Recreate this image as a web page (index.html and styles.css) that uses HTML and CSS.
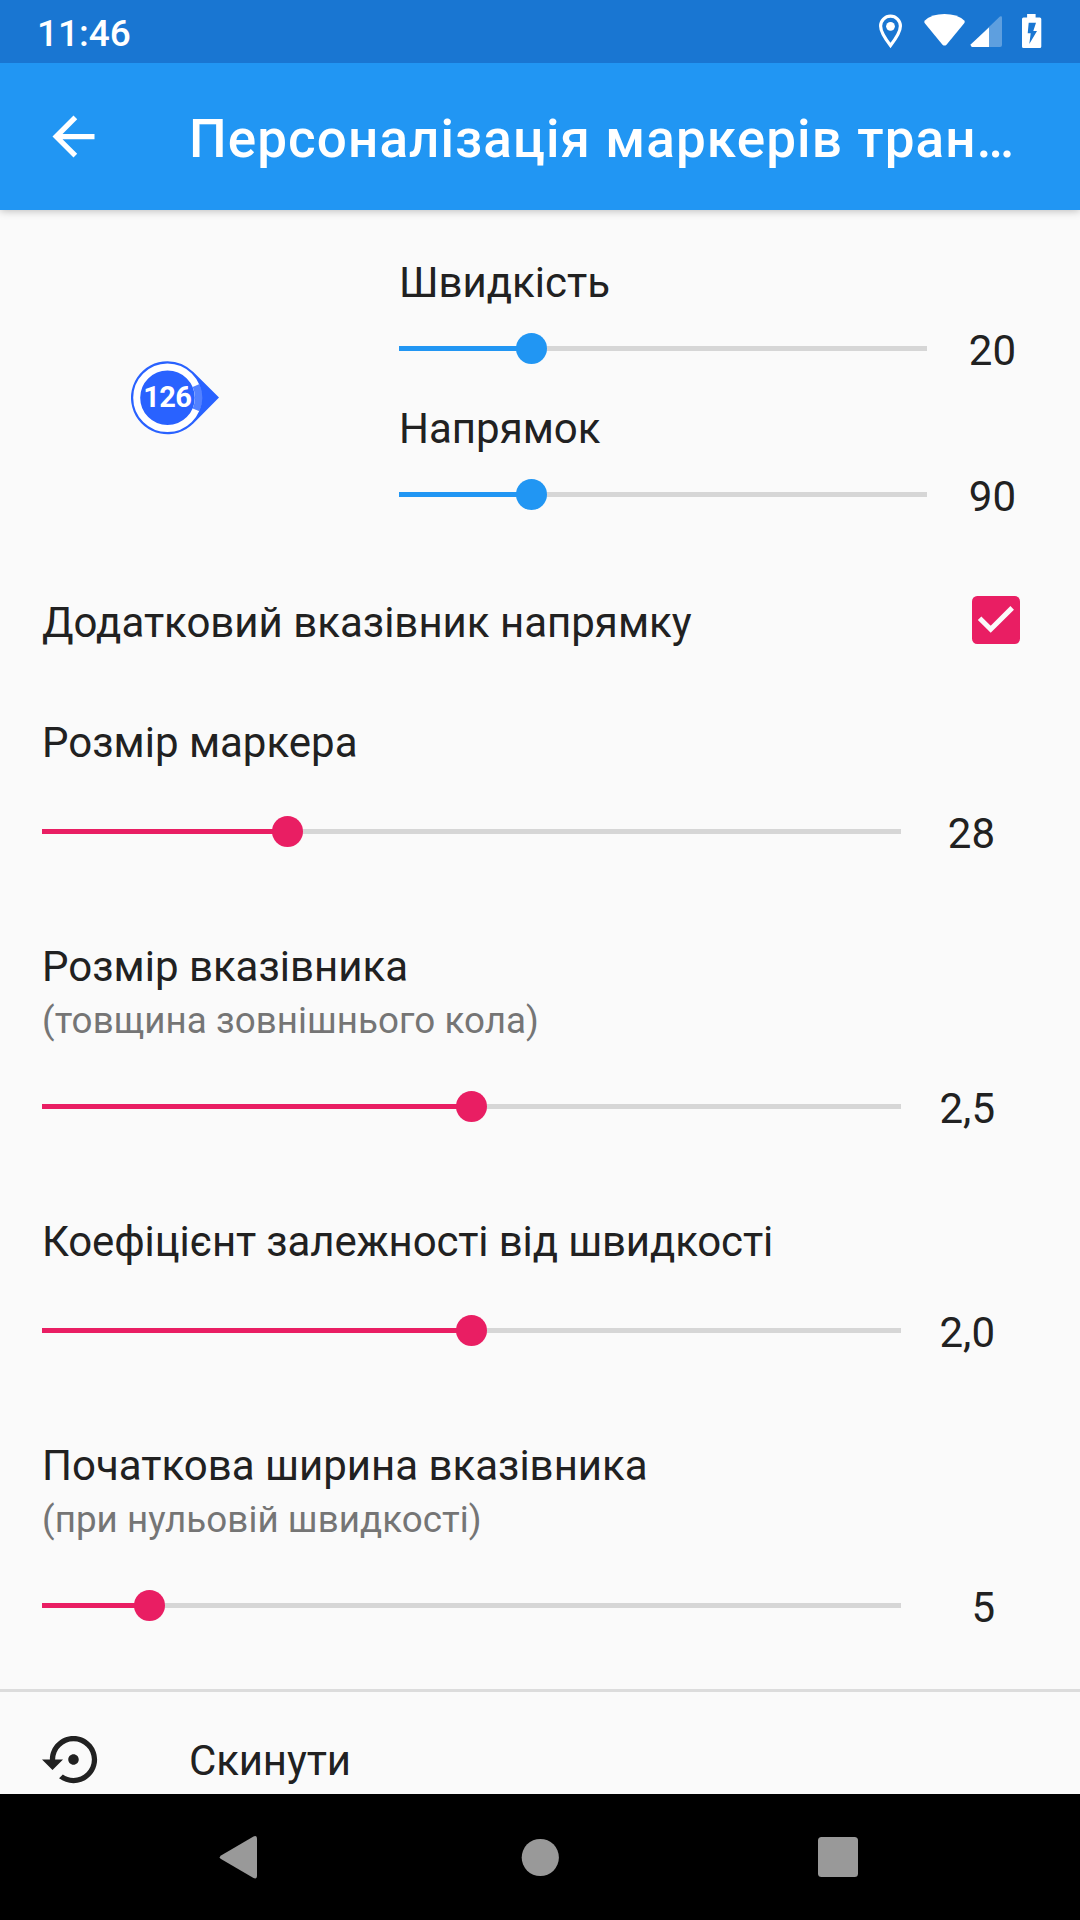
FILE: index.html
```html
<!DOCTYPE html>
<html lang="uk">
<head>
<meta charset="utf-8">
<title>Персоналізація маркерів</title>
<link rel="stylesheet" href="styles.css">
</head>
<body>
<div class="screen">
  <header class="status-bar">
    <span class="clock">11:46</span>
    <svg class="status-icons" width="180" height="63" viewBox="0 0 180 63">
      <path fill="none" stroke="#fff" stroke-width="3.2" d="M10.500 16.200a9.900 9.900 0 0 0-9.900 9.900c0 6.800 9.900 19.500 9.900 19.500s9.900-12.700 9.900-19.500a9.900 9.900 0 0 0-9.900-9.900z"/>
      <circle cx="10.500" cy="26.300" r="4.400" fill="#fff"/>
      <path fill="#fff" d="M44.900 20.500Q52 14.100 64.500 14.100T84.200 20.500Q85.300 21.800 84.400 23L66.500 44.700Q64.500 46.500 62.500 44.700L44.600 23Q43.800 21.800 44.900 20.500z"/>
      <path fill="#fff" fill-opacity=".3" d="M119.900 16.500q2-1 2.100 1V45q0 2-2 2H92q-2-1-1-2.700z"/>
      <path fill="#fff" d="M109 27.400V47H92q-2-1-1-2.700z"/>
      <path fill="#fff" fill-rule="evenodd" d="M147.100 14h8.500v3.500h4.200q1.500 0 1.500 1.500v27.500q0 1.500-1.500 1.500h-16.300q-1.500 0-1.500-1.500V19q0-1.500 1.500-1.500h3.600zM148.700 22.700l-1 10.600h3L149.300 44 157 31h-3.700L156 22.700z"/>
    </svg>
  </header>

  <div class="app-bar">
    <svg class="back" width="63" height="63" viewBox="0 0 24 24"><path fill="#fff" d="M20 11H7.830l5.590-5.590L12 4l-8 8 8 8 1.410-1.410L7.830 13H20v-2z"/></svg>
    <h1 class="title">Персоналізація маркерів тран…</h1>
  </div>

  <main class="content">
    <section class="preview">
      <div class="marker-area">
        <svg class="marker" width="90" height="76" viewBox="0 0 90 76">
          <path fill="#2962ff" d="M37.500 1.200a36.500 36.500 0 1 0 25.800 62.300L89 37.500 63.300 12.100A36.500 36.500 0 0 0 37.500 1.200z"/>
          <circle cx="37.500" cy="37.700" r="30.800" fill="none" stroke="#fff" stroke-width="7"/>
          <path fill="none" stroke="#2962ff" stroke-width="7.400" d="M66.200 25.500A30.800 30.800 0 0 1 66.200 49.900"/>
          <path fill="none" stroke="#fff" stroke-opacity=".2" stroke-width="7" d="M66.200 25.500A30.800 30.800 0 0 1 66.200 49.900"/>
          <text class="marker-number" x="37.300" y="47.300" text-anchor="middle">126</text>
        </svg>
      </div>
      <div class="preview-controls">
        <div class="label">Швидкість</div>
        <div class="slider-row">
          <div class="slider blue"><div class="fill" style="width:25%"></div><div class="thumb"></div></div>
          <span class="value">20</span>
        </div>
        <div class="label">Напрямок</div>
        <div class="slider-row">
          <div class="slider blue"><div class="fill" style="width:25%"></div><div class="thumb"></div></div>
          <span class="value">90</span>
        </div>
      </div>
    </section>

    <section class="check-row">
      <div class="label">Додатковий вказівник напрямку</div>
      <svg class="checkbox" width="48" height="48" viewBox="0 0 48 48"><rect width="48" height="48" rx="5.200" fill="#e91e63"/><path fill="none" stroke="#fafafa" stroke-width="5" d="M7.600 22.300L18.700 33.200 40.200 11.900"/></svg>
    </section>

    <section class="setting">
      <div class="label">Розмір маркера</div>
      <div class="slider-row">
        <div class="slider"><div class="fill" style="width:28.57%"></div><div class="thumb"></div></div>
        <span class="value">28</span>
      </div>
    </section>

    <section class="setting with-hint">
      <div class="label">Розмір вказівника</div>
      <div class="hint">(товщина зовнішнього кола)</div>
      <div class="slider-row">
        <div class="slider"><div class="fill" style="width:50%"></div><div class="thumb"></div></div>
        <span class="value">2,5</span>
      </div>
    </section>

    <section class="setting">
      <div class="label tight">Коефіцієнт залежності від швидкості</div>
      <div class="slider-row">
        <div class="slider"><div class="fill" style="width:50%"></div><div class="thumb"></div></div>
        <span class="value">2,0</span>
      </div>
    </section>

    <section class="setting with-hint last">
      <div class="label">Початкова ширина вказівника</div>
      <div class="hint">(при нульовій швидкості)</div>
      <div class="slider-row">
        <div class="slider"><div class="fill" style="width:12.5%"></div><div class="thumb"></div></div>
        <span class="value">5</span>
      </div>
    </section>

    <section class="reset">
      <svg class="reset-icon" width="63" height="63" viewBox="0 0 24 24"><path fill="#212121" d="M14 12c0-1.100-.9-2-2-2s-2 .9-2 2 .9 2 2 2 2-.9 2-2zm-2-9c-4.970 0-9 4.030-9 9H0l4 4 4-4H5c0-3.870 3.130-7 7-7s7 3.130 7 7-3.130 7-7 7c-1.510 0-2.910-.49-4.060-1.300l-1.420 1.440C8.040 20.300 9.940 21 12 21c4.970 0 9-4.030 9-9s-4.030-9-9-9z"/></svg>
      <div class="label tight">Скинути</div>
    </section>
  </main>

  <nav class="nav-bar">
    <svg width="1080" height="126" viewBox="0 0 1080 126" fill="#999">
      <path d="M253.500 42.500q3.500-1.500 3.500 2.500v36.500q0 4-3.500 2.500L221 65q-2.500-1.800 0-3.600z"/>
      <circle cx="540.300" cy="63.500" r="18.600"/>
      <rect x="818" y="43" width="40" height="40" rx="3.500"/>
    </svg>
  </nav>
</div>
</body>
</html>
```
FILE: styles.css
```css
* { box-sizing: border-box; }

body {
  margin: 0;
  background: #fafafa;
  color: #212121;
  font-family: Roboto, "Noto Sans", sans-serif;
  font-size: 42px;
}

svg { display: block; flex: none; }

.screen {
  display: flex;
  flex-direction: column;
  width: 1080px;
  height: 1920px;
  overflow: hidden;
}

.status-bar {
  position: relative;
  z-index: 2;
  display: flex;
  justify-content: space-between;
  flex: none;
  height: 63px;
  padding-left: 37px;
  background: #1976d2;
}

.status-icons {
  margin-right: 20px;
  overflow: visible;
}

.clock {
  color: #fff;
  font-size: 37px;
  font-weight: 500;
  line-height: 67px;
}

.app-bar {
  position: relative;
  z-index: 1;
  display: flex;
  align-items: center;
  flex: none;
  height: 147px;
  padding: 0 42px;
  background: #2196f3;
  box-shadow: 0 1px 8px rgba(0, 0, 0, .25);
}

.title {
  flex: 1;
  margin: 4px 0 0 84px;
  color: #fff;
  font-size: 53px;
  font-weight: 500;
  letter-spacing: 1.1px;
  line-height: 72px;
  white-space: nowrap;
}

.content {
  flex: 1;
  min-height: 0;
  overflow: hidden;
}

.label,
.value {
  line-height: 50px;
  white-space: nowrap;
}

.label.tight { letter-spacing: -.14px; }

.preview {
  display: flex;
  height: 341px;
}

.marker-area {
  width: 399px;
  padding: 150px 0 0 130px;
}

.marker-number {
  fill: #fff;
  font-size: 29px;
  font-weight: 700;
  letter-spacing: -.6px;
}

.preview-controls { padding-top: 48px; }
.preview-controls .slider-row { height: 96px; padding-top: 25px; }
.preview-controls .slider { width: 528px; }
.preview-controls .value { width: 89px; }

.slider-row {
  display: flex;
  align-items: flex-start;
}

.slider {
  display: flex;
  align-items: center;
  width: 859px;
  height: 31px;
  color: #e91e63;
  background: linear-gradient(#d6d6d6, #d6d6d6) center / 100% 5px no-repeat;
}

.slider.blue { color: #2196f3; }

.fill {
  height: 5px;
  background: currentColor;
}

.thumb {
  flex: none;
  width: 31px;
  height: 31px;
  margin-left: -15.5px;
  border-radius: 50%;
  background: currentColor;
}

.value {
  width: 94px;
  margin-top: -7px;
  text-align: right;
}

.check-row {
  display: flex;
  align-items: flex-start;
  justify-content: space-between;
  height: 120px;
  padding: 45px 60px 0 42px;
}

.check-row .label { line-height: 54px; }

.setting {
  height: 224px;
  padding: 47px 42px 0;
}

.setting .slider-row { padding-top: 48px; }

.with-hint { height: 275px; }

.with-hint.last { height: 295px; }

.hint {
  height: 51px;
  padding-top: 7px;
  color: #757575;
  font-size: 36.75px;
  letter-spacing: .06px;
  line-height: 44px;
  white-space: nowrap;
}

.reset {
  display: flex;
  align-items: center;
  height: 138px;
  padding-left: 42px;
  border-top: 3px solid #dcdcdc;
}

.reset .label { margin: 3px 0 0 84px; }

.nav-bar {
  flex: none;
  height: 126px;
  background: #000;
}
```
